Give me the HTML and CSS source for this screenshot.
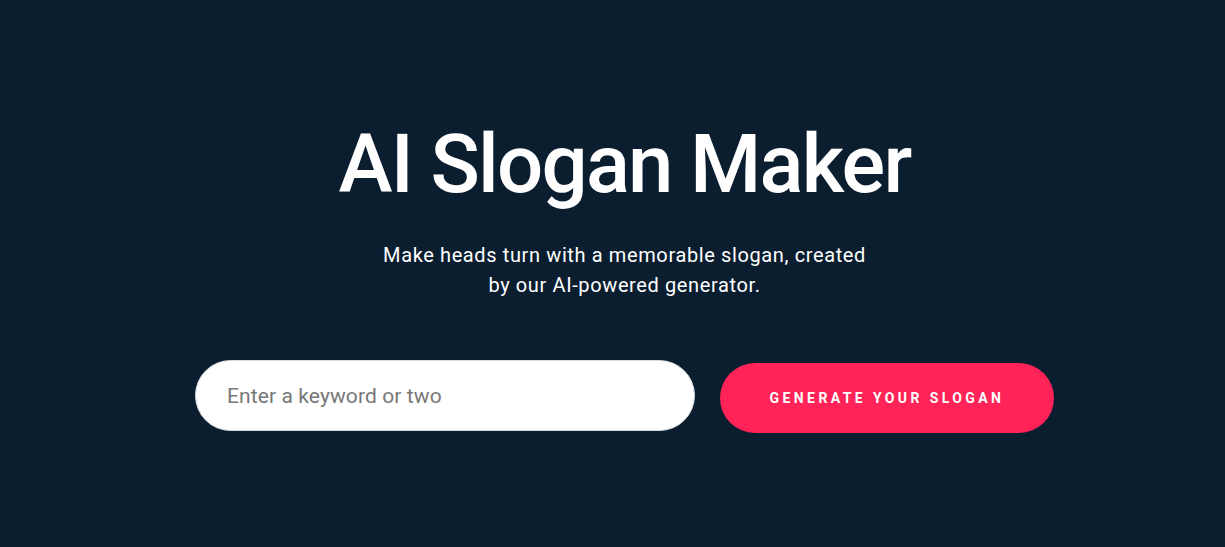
FILE: index.html
```html
<!DOCTYPE html>
<html>
<head>
<meta charset="utf-8">
<link rel="stylesheet" href="styles.css">
</head>
<body>
<main class="hero">
  <h1 class="title">AI Slogan Maker</h1>
  <p class="subtitle">Make heads turn with a memorable slogan, created<br>by our AI-powered generator.</p>
  <form class="form">
    <input class="input" type="text" placeholder="Enter a keyword or two">
    <button class="button" type="button">GENERATE YOUR SLOGAN</button>
  </form>
</main>
</body>
</html>
```

FILE: styles.css
```css
html, body {
  margin: 0;
  padding: 0;
  background: #0b1e2f;
  height: 100%;
}
body {
  font-family: Roboto, "Liberation Sans", sans-serif;
  color: #ffffff;
}
.hero {
  display: flex;
  flex-direction: column;
  align-items: center;
  padding: 114px 0 0 24px;
}
.title {
  margin: 0;
  font-size: 81.5px;
  font-weight: 500;
  line-height: 100px;
  letter-spacing: -1.8px;
}
.subtitle {
  margin: 26px 0 0;
  font-size: 20px;
  line-height: 30px;
  text-align: center;
  letter-spacing: 0.62px;
}
.form {
  display: flex;
  align-items: flex-start;
  gap: 25px;
  margin-top: 60px;
}
.input {
  box-sizing: border-box;
  width: 500px;
  height: 71px;
  border: 1px solid #d6dbe0;
  border-radius: 36px;
  padding: 0 31px;
  font-family: inherit;
  font-size: 21px;
  letter-spacing: 0.1px;
  color: #333;
  background: #fff;
  outline: none;
}
.input::placeholder {
  color: #777777;
}
.button {
  width: 334px;
  height: 70px;
  margin-top: 3px;
  border: none;
  border-radius: 35px;
  background: #ff2357;
  color: #fff;
  font-family: inherit;
  font-size: 14px;
  font-weight: 700;
  letter-spacing: 3.4px;
  cursor: pointer;
}
```
